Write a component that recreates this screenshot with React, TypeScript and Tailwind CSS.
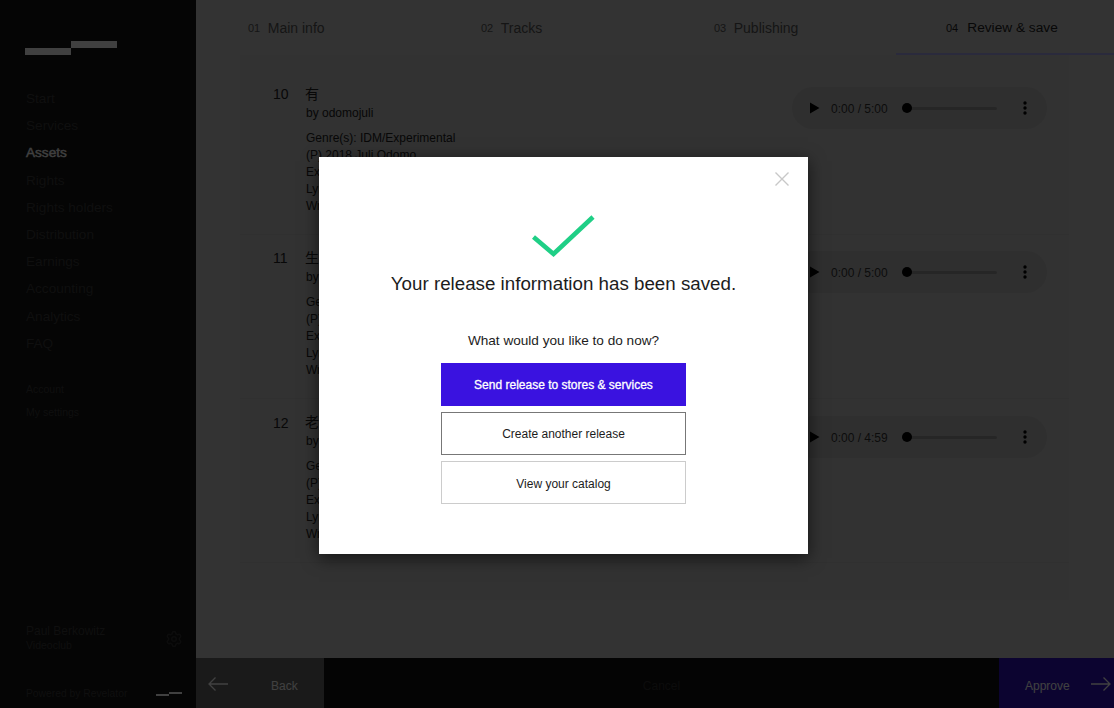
import { Settings } from "lucide-react";

const font = { fontFamily: '"Liberation Sans", "Noto Sans CJK SC", Arial, sans-serif' };

const nav = ["Start", "Services", "Assets", "Rights", "Rights holders", "Distribution", "Earnings", "Accounting", "Analytics", "FAQ"];
const tabs = [
  ["01", "Main info"],
  ["02", "Tracks"],
  ["03", "Publishing"],
];
const tracks = [
  { n: "10", t: "有", d: "5:00", late: false },
  { n: "11", t: "生", d: "5:00", late: false },
  { n: "12", t: "老", d: "4:59", late: true },
];

function Player({ d }: { d: string }) {
  return (
    <div className="flex h-[42px] w-[255px] items-center rounded-full bg-[#bcbcbc] pl-[17px] pr-[17px]">
      <svg width="11" height="12" viewBox="0 0 11 12" className="shrink-0">
        <path d="M1 0.5 L10.5 6 L1 11.5 Z" fill="#000" />
      </svg>
      <span className="ml-[11px] w-[64px] shrink-0 pt-[1px] text-[12px] text-[#333]">0:00 / {d}</span>
      <div className="relative ml-[7px] h-[3px] w-[95px] rounded-full bg-[#999]">
        <div className="absolute -top-[3.5px] left-0 h-[10px] w-[10px] rounded-full bg-black" />
      </div>
      <svg width="4" height="14" viewBox="0 0 4 14" className="ml-[26px] shrink-0">
        <circle cx="2" cy="2" r="1.7" fill="#000" />
        <circle cx="2" cy="7" r="1.7" fill="#000" />
        <circle cx="2" cy="12" r="1.7" fill="#000" />
      </svg>
    </div>
  );
}

function Track({ n, t, d, late }: { n: string; t: string; d: string; late: boolean }) {
  return (
    <div className="flex h-[164px] border-b border-[#c0c0c0] pl-[33px] pr-[22px] pt-[15px]">
      <div className={`w-[33px] text-[14px] leading-[17px] text-[#222] ${late ? "pt-[1px]" : ""}`}>{n}</div>
      <div className="flex-1 text-[12px] leading-[17px] text-[#222]">
        <div className="-ml-[1px] text-[14px] leading-[17px]">{t}</div>
        <div className="mt-[2px]">by odomojuli</div>
        <div className="mt-[8px]">Genre(s): IDM/Experimental</div>
        <div>(P) 2018 Juli Odomo</div>
        <div>Explicit: No</div>
        <div>Lyrics: None</div>
        <div>Written by: Juli Odomo</div>
      </div>
      <div className={late ? "pt-[2px]" : "pt-[1px]"}>
        <Player d={d} />
      </div>
    </div>
  );
}

export default function App() {
  return (
    <div style={font} className="relative flex h-screen w-full overflow-hidden bg-[#cccccc]">
      <aside className="flex w-[196px] shrink-0 flex-col bg-[#141414] pl-[26px] pr-[14px] text-[#3c3c3c]">
        <div className="mt-[41px] flex h-[14px] -translate-x-[1px]">
          <div className="mt-[7px] h-[7px] w-[46px] bg-white" />
          <div className="h-[7px] w-[46px] bg-white" />
        </div>
        <nav className="mt-[30px] flex flex-col">
          {nav.map((x) => (
            <div
              key={x}
              className={`h-[27.2px] text-[13.6px] leading-[27px] ${x === "Assets" ? "text-white [-webkit-text-stroke:0.4px_white]" : ""}`}
            >
              {x}
            </div>
          ))}
        </nav>
        <div className="mt-[25px] flex flex-col gap-[8px] text-[10.5px] leading-[15px]">
          <div>Account</div>
          <div>My settings</div>
        </div>
        <div className="mt-auto flex items-center justify-between">
          <div className="leading-[14px]">
            <div className="text-[12px]">Paul Berkowitz</div>
            <div className="text-[10.5px]">Videoclub</div>
          </div>
          <Settings size={18} strokeWidth={2} className="mt-[2px] translate-x-[1px] text-[#303030]" />
        </div>
        <div className="mb-[7px] mt-[35px] flex items-center justify-between text-[10.3px] leading-[14px]">
          <span>Powered by Revelator</span>
          <div className="flex">
            <div className="mt-[2px] h-[2px] w-[13px] bg-white" />
            <div className="h-[2px] w-[13px] bg-white" />
          </div>
        </div>
      </aside>

      <main className="flex min-w-0 flex-1 flex-col">
        <div className="flex h-[55px] shrink-0 pl-[1px] text-[14px]">
          {tabs.map(([a, b]) => (
            <div key={a} className="flex w-[233px] items-center pl-[51px] pt-[2px] text-[#555]">
              <span className="mr-[7.5px] text-[11px]">{a}</span>
              {b}
            </div>
          ))}
          <div className="flex flex-1 items-center border-b-2 border-[#a8a8f0] pl-[50px] pt-[3px] text-[13.7px] text-[#222]">
            <span className="mr-[9px] text-[11px]">04</span>
            Review &amp; save
          </div>
        </div>
        <div className="flex flex-1 pb-[58px] pl-[44px]">
          <div className="w-[829px] bg-[#c6c6c6] pt-[16px]">
            {tracks.map((x) => (
              <Track key={x.n} {...x} />
            ))}
          </div>
        </div>
        <div className="flex h-[50px] shrink-0 items-center bg-[#101010] text-[12px]">
          <div className="flex h-full w-[128px] items-center bg-[#686868] pl-[12px] text-white">
            <svg width="20" height="14" viewBox="0 0 20 14" fill="none" stroke="#fff" strokeWidth="1.3" className="translate-y-[1px]">
              <path d="M20 7 H1 M7.5 0.5 L1 7 L7.5 13.5" />
            </svg>
            <span className="ml-[43px] pt-[5px]">Back</span>
          </div>
          <div className="flex-1 pt-[5px] text-center text-[#303030]">Cancel</div>
          <div className="flex h-full w-[115px] items-center bg-[#3010c0] pl-[26px] text-white">
            <span className="pt-[5px]">Approve</span>
            <svg width="20" height="14" viewBox="0 0 20 14" fill="none" stroke="#fff" strokeWidth="1.3" className="ml-[21px] translate-y-[1px]">
              <path d="M0 7 H19 M12.5 0.5 L19 7 L12.5 13.5" />
            </svg>
          </div>
        </div>
      </main>

      <div className="absolute inset-0 flex items-center justify-center bg-black/75 pl-[13px] pt-[3px]">
        <div className="relative flex h-[397px] w-[489px] flex-col items-center bg-white shadow-[0_4px_16px_rgba(0,0,0,0.6)]">
          <svg width="16" height="16" viewBox="0 0 16 16" className="absolute right-[18px] top-[14px]" fill="none" stroke="#c8c8c8" strokeWidth="1.4">
            <path d="M1.5 1.5 L14.5 14.5 M14.5 1.5 L1.5 14.5" />
          </svg>
          <svg width="68" height="50" viewBox="0 0 68 50" fill="none" stroke="#1fcf86" strokeWidth="4.6" className="mt-[57px] shrink-0">
            <path d="M3.5 23 L23.5 40 L63 3" />
          </svg>
          <h1 className="mt-[8px] text-[18.75px] leading-[24px] text-[#1c1c1c]">Your release information has been saved.</h1>
          <p className="mt-[36px] text-[13.6px] leading-[18px] text-[#1c1c1c]">What would you like to do now?</p>
          <div className="mt-[13px] flex w-[245px] flex-col gap-[6px] text-[12px]">
            <button className="h-[43px] bg-[#3a12e0] text-white [-webkit-text-stroke:0.3px_white]">Send release to stores &amp; services</button>
            <button className="h-[43px] border border-[#777] pt-[1px] text-[#1c1c1c]">Create another release</button>
            <button className="h-[43px] border border-[#ccc] pt-[2px] text-[#1c1c1c]">View your catalog</button>
          </div>
        </div>
      </div>
    </div>
  );
}
